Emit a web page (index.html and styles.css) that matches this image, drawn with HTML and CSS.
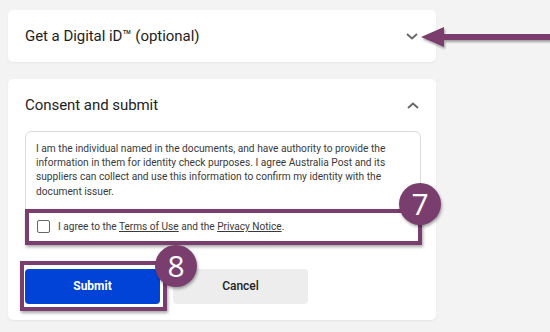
FILE: index.html
```html
<!DOCTYPE html>
<html>
<head>
<meta charset="utf-8">
<link rel="stylesheet" href="styles.css">
</head>
<body>
<div class="page">
  <section class="card card-collapsed">
    <h2 class="card-title">Get a Digital iD™ (optional)</h2>
    <svg class="chevron" width="12" height="7" viewBox="0 0 12 7"><path d="M1 1 L6 5.5 L11 1" fill="none" stroke="#666" stroke-width="1.8"/></svg>
  </section>

  <section class="card card-open">
    <div class="card-head">
      <h2 class="card-title">Consent and submit</h2>
      <svg class="chevron" width="12" height="7" viewBox="0 0 12 7"><path d="M1 6 L6 1.5 L11 6" fill="none" stroke="#666" stroke-width="1.8"/></svg>
    </div>
    <div class="consent-box">
      <p class="consent-text">I am the individual named in the documents, and have authority to provide the information in them for identity check purposes. I agree Australia Post and its suppliers can collect and use this information to confirm my identity with the document issuer.</p>
      <div class="agree-row highlight">
        <span class="checkbox"></span>
        <span class="agree-text">I agree to the <a href="#">Terms of Use</a> and the <a href="#">Privacy Notice</a>.</span>
        <span class="badge badge-7">7</span>
      </div>
    </div>
    <div class="actions">
      <div class="submit-wrap">
        <button class="btn btn-primary">Submit</button>
        <span class="btn-highlight"></span>
        <span class="badge badge-8">8</span>
      </div>
      <button class="btn btn-secondary">Cancel</button>
    </div>
  </section>
</div>
<svg class="arrow" width="132" height="40" viewBox="0 0 132 40">
  <defs>
    <filter id="sh" x="-10%" y="-30%" width="130%" height="180%">
      <feDropShadow dx="1" dy="2" stdDeviation="1.2" flood-color="#000" flood-opacity="0.35"/>
    </filter>
  </defs>
  <g filter="url(#sh)">
    <polygon points="2,17 25,7 25,27" fill="#7a3e6e"/>
    <rect x="23" y="14" width="109" height="6" fill="#7a3e6e"/>
  </g>
</svg>
</body>
</html>
```
FILE: styles.css
```css
* { box-sizing: border-box; }
html, body { margin: 0; padding: 0; }
body {
  background: #f3f3f3;
  width: 550px;
  height: 332px;
  overflow: hidden;
  font-family: Roboto, "Liberation Sans", sans-serif;
  color: #222;
  position: relative;
}
.page {
  padding: 10px 0 0 8px;
  width: 436px;
  display: flex;
  flex-direction: column;
  gap: 17px;
}
.card {
  background: #fff;
  border-radius: 5px;
  box-shadow: 0 1px 2px rgba(0,0,0,0.06);
}
.card-collapsed {
  height: 52px;
  display: flex;
  align-items: center;
  justify-content: space-between;
  padding: 0 18px 0 17px;
}
.card-title {
  margin: 0;
  font-size: 15px;
  font-weight: 400;
  color: #1e1e1e;
  letter-spacing: -0.05px;
}
.chevron { display: block; }
.card-open {
  padding: 16px 15px 16px 17px;
}
.card-head {
  height: 20px;
  display: flex;
  align-items: center;
  justify-content: space-between;
  padding-right: 2px;
  margin-bottom: 16px;
}
.consent-box {
  border: 1px solid #dcdcdc;
  border-radius: 6px;
}
.consent-text {
  margin: 0;
  padding: 10px 10px 10px 10px;
  font-size: 10.2px;
  line-height: 14.2px;
  color: #3a3a3a;
}
.highlight {
  border: 4px solid #7a3e6e;
  box-shadow: 1px 2px 3px rgba(0,0,0,0.35);
}
.agree-row {
  position: relative;
  margin: 0 -2px -1px -1px;
  height: 36px;
  display: flex;
  align-items: center;
  gap: 8px;
  padding-left: 8px;
  background: #fff;
  font-size: 10.1px;
  color: #3a3a3a;
}
.checkbox {
  width: 13px;
  height: 13px;
  border: 1px solid #666;
  border-radius: 2px;
  background: #fff;
}
.agree-text a { color: #3a3a3a; text-decoration: underline; }
.badge {
  position: absolute;
  width: 42px;
  height: 42px;
  border-radius: 50%;
  background: #7a3e6e;
  color: #fff;
  font-family: "Open Sans", "Liberation Sans", sans-serif;
  font-size: 30px;
  line-height: 42px;
  text-align: center;
  box-shadow: 1px 2px 3px rgba(0,0,0,0.35);
}
.badge-7 { right: -23px; top: -30px; }
.actions {
  margin-top: 24px;
  display: flex;
  gap: 13px;
}
.submit-wrap { position: relative; }
.btn {
  width: 135px;
  height: 35px;
  border: none;
  border-radius: 4px;
  font-family: Roboto, "Liberation Sans", sans-serif;
  font-size: 12px;
  display: block;
}
.btn-primary {
  background: #0043d6;
  color: #fff;
  font-weight: 700;
}
.btn-secondary {
  background: #ededed;
  color: #222;
  font-weight: 500;
}
.btn-highlight {
  position: absolute;
  left: -5px; right: -7px; top: -8px; bottom: -7px;
  border: 4px solid #7a3e6e;
  box-shadow: 1px 2px 3px rgba(0,0,0,0.35);
  pointer-events: none;
}
.badge-8 { left: 130px; top: -24px; }
.arrow {
  position: absolute;
  left: 419px;
  top: 20px;
}
```
